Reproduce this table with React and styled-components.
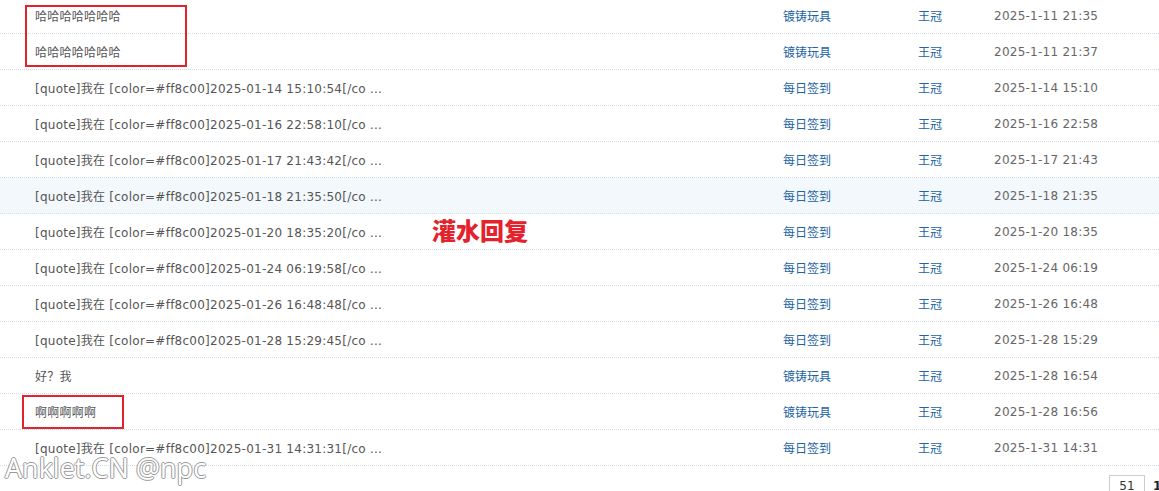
import React from "react";
import styled, { createGlobalStyle } from "styled-components";

const Global = createGlobalStyle`
  html, body { margin: 0; padding: 0; background: #fff; }
  body {
    font-family: "DejaVu Sans", "Noto Sans CJK SC", sans-serif;
    font-size: 12px;
    color: #444;
    overflow: hidden;
  }
`;

const Page = styled.div`
  position: relative;
  width: 1159px;
  height: 491px;
  overflow: hidden;
`;

const Table = styled.div`
  margin-top: -2px;
  display: flex;
  flex-direction: column;
`;

const Row = styled.div`
  display: grid;
  grid-template-columns: 783px 135px 76px 1fr;
  height: 35px;
  align-items: center;
  border-bottom: 1px dotted #cfdfea;
  background: ${(p) => (p.$hover ? "#f2f8fb" : "#fff")};
  letter-spacing: 0.25px;
`;

const Subject = styled.div`
  padding-left: 35px;
  color: #555;
  white-space: nowrap;
`;

const Link = styled.div`
  color: #2263a3;
  white-space: nowrap;
  letter-spacing: 0;
`;

const DateCell = styled.div`
  color: #666;
  white-space: nowrap;
`;

const Pager = styled.div`
  display: flex;
  justify-content: flex-end;
  align-items: flex-start;
  gap: 8px;
  padding-top: 9px;
`;

const PageBox = styled.div`
  width: 36px;
  height: 20px;
  border: 1px solid #ccc;
  color: #333;
  display: flex;
  justify-content: center;
  padding-top: 3px;
  box-sizing: border-box;
`;

const PageCurrent = styled.div`
  font-weight: bold;
  color: #222;
  padding-top: 4px;
  width: 6px;
  overflow: hidden;
`;

const Highlight = styled.div`
  position: absolute;
  left: ${(p) => p.$x}px;
  top: ${(p) => p.$y}px;
  width: ${(p) => p.$w}px;
  height: ${(p) => p.$h}px;
  border: 2px solid #e3222c;
  box-sizing: border-box;
  pointer-events: none;
`;

const Label = styled.div`
  position: absolute;
  left: 432px;
  top: 212px;
  font-family: "Noto Sans CJK SC", sans-serif;
  font-size: 24px;
  font-weight: 900;
  color: #e3222c;
`;

const Watermark = styled.div`
  position: absolute;
  left: 5px;
  top: 449px;
  font-family: "Open Sans", "Noto Sans", sans-serif;
  font-size: 27px;
  font-weight: 400;
  color: #fff;
  text-shadow:
    1px 0 0 #9a9a9a, -1px 0 0 #9a9a9a,
    0 1px 0 #9a9a9a, 0 -1px 0 #9a9a9a;
  white-space: nowrap;
`;

const q = (t) => `[quote]我在 [color=#ff8c00]2025-01-${t}[/co ...`;

const rows = [
  ["哈哈哈哈哈哈哈", "镀铸玩具", "2025-1-11 21:35"],
  ["哈哈哈哈哈哈哈", "镀铸玩具", "2025-1-11 21:37"],
  [q("14 15:10:54"), "每日签到", "2025-1-14 15:10"],
  [q("16 22:58:10"), "每日签到", "2025-1-16 22:58"],
  [q("17 21:43:42"), "每日签到", "2025-1-17 21:43"],
  [q("18 21:35:50"), "每日签到", "2025-1-18 21:35", true],
  [q("20 18:35:20"), "每日签到", "2025-1-20 18:35"],
  [q("24 06:19:58"), "每日签到", "2025-1-24 06:19"],
  [q("26 16:48:48"), "每日签到", "2025-1-26 16:48"],
  [q("28 15:29:45"), "每日签到", "2025-1-28 15:29"],
  ["好？我", "镀铸玩具", "2025-1-28 16:54"],
  ["啊啊啊啊啊", "镀铸玩具", "2025-1-28 16:56"],
  [q("31 14:31:31"), "每日签到", "2025-1-31 14:31"],
];

export default function App() {
  return (
    <>
      <Global />
      <Page>
        <Table>
          {rows.map(([s, f, d, h], i) => (
            <Row key={i} $hover={h}>
              <Subject>{s}</Subject>
              <Link>{f}</Link>
              <Link>王冠</Link>
              <DateCell>{d}</DateCell>
            </Row>
          ))}
        </Table>
        <Pager>
          <PageBox>51</PageBox>
          <PageCurrent>1</PageCurrent>
        </Pager>
        <Highlight $x={25} $y={5} $w={162} $h={62} />
        <Highlight $x={22} $y={395} $w={102} $h={34} />
        <Label>灌水回复</Label>
        <Watermark>Anklet.CN @npc</Watermark>
      </Page>
    </>
  );
}
